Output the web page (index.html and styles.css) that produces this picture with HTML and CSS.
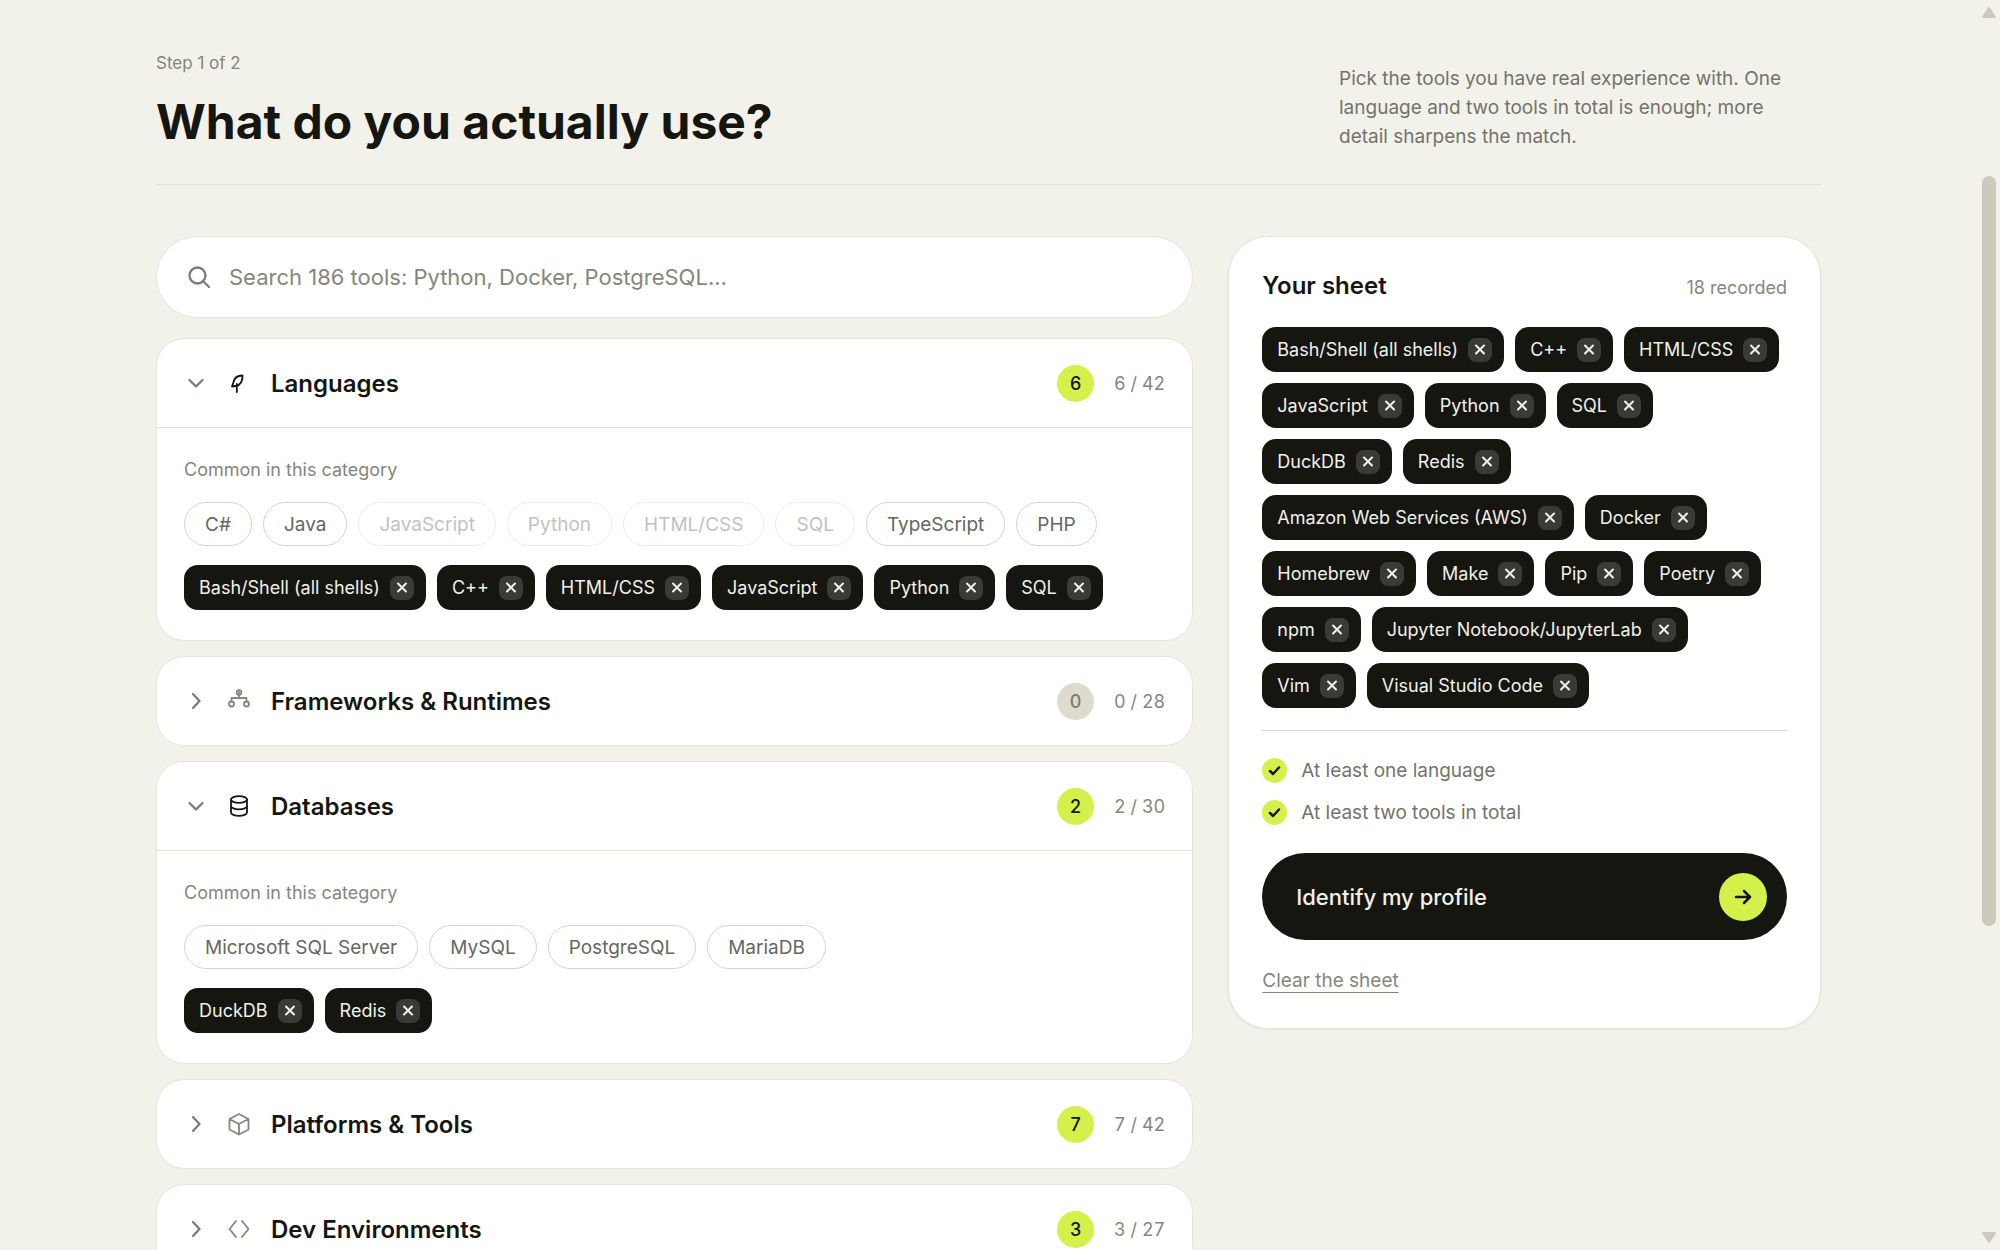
FILE: index.html
```html
<!DOCTYPE html>
<html lang="en">
<head>
    <meta charset="UTF-8">
    <meta name="viewport" content="width=device-width, initial-scale=1.0">
    <title>What do you actually use?</title>
    <link rel="stylesheet" href="styles.css">
</head>
<body>
    <main class="page">
        <header class="page-header">
            <div>
                <p class="step">Step 1 of 2</p>
                <h1>What do you actually use?</h1>
            </div>
            <p class="intro">Pick the tools you have real experience with. One language and two tools in total is enough; more detail sharpens the match.</p>
        </header>

        <div class="columns">
            <div class="picker">
                <label class="search">
                    <svg class="search-icon" viewBox="0 0 24 24"><circle cx="10.5" cy="10.5" r="8"/><path d="M16.5 16.5 22 22"/></svg>
                    <input type="search" aria-label="Search tools" placeholder="Search 186 tools: Python, Docker, PostgreSQL...">
                </label>

                <section class="category open">
                    <button class="category-header" aria-expanded="true">
                        <svg class="chevron" viewBox="0 0 22 22"><path d="M4.500 8 11 14.500 17.500 8"/></svg>
                        <svg class="icon" viewBox="0 0 24 24"><path d="M15.500 4.500C10.500 4.500 7 7 6.200 12L5 15.500 11 14.500C14.500 12 15.800 9 15.500 4.500ZM9.800 13V21"/></svg>
                        <span class="category-name">Languages</span>
                        <span class="badge">6</span>
                        <span class="count">6 / 42</span>
                    </button>
                    <div class="category-body">
                        <p class="hint">Common in this category</p>
                        <div class="chips" data-common="C#|Java|JavaScript|Python|HTML/CSS|SQL|TypeScript|PHP"></div>
                        <div class="chips" data-picked="Bash/Shell (all shells)|C++|HTML/CSS|JavaScript|Python|SQL"></div>
                    </div>
                </section>

                <section class="category">
                    <button class="category-header" aria-expanded="false">
                        <svg class="chevron" viewBox="0 0 22 22"><path d="M8 4 14.500 11 8 18"/></svg>
                        <svg class="icon" viewBox="0 0 24 24"><circle cx="12" cy="3.500" r="2.300"/><circle cx="4.500" cy="15" r="2.500"/><circle cx="19.500" cy="15" r="2.500"/><path d="M12 3V9M4.500 12.500V9H19.500V12.500"/></svg>
                        <span class="category-name">Frameworks &amp; Runtimes</span>
                        <span class="badge empty">0</span>
                        <span class="count">0 / 28</span>
                    </button>
                </section>

                <section class="category open">
                    <button class="category-header" aria-expanded="true">
                        <svg class="chevron" viewBox="0 0 22 22"><path d="M4.500 8 11 14.500 17.500 8"/></svg>
                        <svg class="icon" viewBox="0 0 24 24"><ellipse cx="12" cy="5.500" rx="8" ry="3.300"/><path d="M4 5.500V18.500C4 20.300 7.600 21.800 12 21.800S20 20.300 20 18.500V5.500M4 12C4 13.800 7.600 15.300 12 15.300S20 13.800 20 12"/></svg>
                        <span class="category-name">Databases</span>
                        <span class="badge">2</span>
                        <span class="count">2 / 30</span>
                    </button>
                    <div class="category-body">
                        <p class="hint">Common in this category</p>
                        <div class="chips" data-common="Microsoft SQL Server|MySQL|PostgreSQL|MariaDB"></div>
                        <div class="chips" data-picked="DuckDB|Redis"></div>
                    </div>
                </section>

                <section class="category">
                    <button class="category-header" aria-expanded="false">
                        <svg class="chevron" viewBox="0 0 22 22"><path d="M8 4 14.500 11 8 18"/></svg>
                        <svg class="icon" viewBox="0 0 24 24"><path d="M12 2 21.500 7V17.500L12 22.500 2.500 17.500V7ZM2.500 7 12 12 21.500 7M12 12V22.500"/></svg>
                        <span class="category-name">Platforms &amp; Tools</span>
                        <span class="badge">7</span>
                        <span class="count">7 / 42</span>
                    </button>
                </section>

                <section class="category">
                    <button class="category-header" aria-expanded="false">
                        <svg class="chevron" viewBox="0 0 22 22"><path d="M8 4 14.500 11 8 18"/></svg>
                        <svg class="icon" viewBox="0 0 24 24"><path d="M9 4 2.500 12 9 20M15 4 21.500 12 15 20"/></svg>
                        <span class="category-name">Dev Environments</span>
                        <span class="badge">3</span>
                        <span class="count">3 / 27</span>
                    </button>
                </section>
            </div>

            <aside class="sheet">
                <div class="sheet-header">
                    <h2>Your sheet</h2>
                    <span class="recorded">18 recorded</span>
                </div>
                <div class="chips" data-picked="Bash/Shell (all shells)|C++|HTML/CSS|JavaScript|Python|SQL|DuckDB|Redis|Amazon Web Services (AWS)|Docker|Homebrew|Make|Pip|Poetry|npm|Jupyter Notebook/JupyterLab|Vim|Visual Studio Code"></div>
                <ul class="rules">
                    <li><svg class="tick" viewBox="0 0 25 25"><path d="M8 13 11 16 17 9.500"/></svg>At least one language</li>
                    <li><svg class="tick" viewBox="0 0 25 25"><path d="M8 13 11 16 17 9.500"/></svg>At least two tools in total</li>
                </ul>
                <button class="submit">
                    Identify my profile
                    <svg class="arrow" viewBox="0 0 48 48"><path d="M17 24H31M25 18 31 24 25 30"/></svg>
                </button>
                <a class="clear" href="#">Clear the sheet</a>
            </aside>
        </div>
    </main>

    <div class="scrollbar" aria-hidden="true">
        <svg viewBox="0 0 14 11"><path d="M7 1 13 10H1Z"/></svg>
        <div class="track"><div class="thumb"></div></div>
        <svg viewBox="0 0 14 11"><path d="M7 10 13 1H1Z"/></svg>
    </div>

    <script>
        const sheet = document.querySelector('.sheet .chips').dataset.picked.split('|');

        document.querySelectorAll('[data-common]').forEach(row => {
            row.dataset.common.split('|').forEach(name => {
                const chip = document.createElement('button');
                chip.className = 'chip';
                chip.textContent = name;
                chip.disabled = sheet.includes(name);
                row.appendChild(chip);
            });
        });

        document.querySelectorAll('[data-picked]').forEach(row => {
            row.dataset.picked.split('|').forEach(name => {
                const chip = document.createElement('span');
                chip.className = 'chip picked';
                chip.textContent = name;

                const remove = document.createElement('button');
                remove.className = 'remove';
                remove.setAttribute('aria-label', 'Remove ' + name);
                remove.innerHTML = '<svg viewBox="0 0 24 24"><path d="M8 7.500 16 15.500M16 7.500 8 15.500"/></svg>';

                chip.appendChild(remove);
                row.appendChild(chip);
            });
        });
    </script>
</body>
</html>
```
FILE: styles.css
```css
* {
    margin: 0;
    padding: 0;
    box-sizing: border-box;
}

body {
    display: flex;
    height: 100vh;
    overflow: hidden;
    background: #f2f1ea;
    color: #15160f;
    font-family: Inter, sans-serif;
    font-size: 19px;
}

button, input {
    font: inherit;
    color: inherit;
    border: none;
    background: none;
}

button {
    cursor: pointer;
}

svg {
    flex: none;
    fill: none;
    stroke: currentColor;
    stroke-width: 2;
    stroke-linecap: round;
    stroke-linejoin: round;
}

.page {
    flex: 1;
    padding: 50px 156px 0;
}

.page-header {
    display: flex;
    justify-content: space-between;
    align-items: flex-end;
    padding-bottom: 33px;
    margin-bottom: 51px;
    border-bottom: 1px solid #e2e1d9;
}

.step {
    color: #85867c;
    font-size: 17px;
    line-height: 26px;
    margin-bottom: 17px;
}

h1 {
    font-size: 48px;
    font-weight: 700;
    line-height: 58px;
}

.intro {
    width: 482px;
    padding-right: 22px;
    color: #73746b;
    line-height: 29px;
}

.columns {
    display: grid;
    grid-template-columns: 7fr 4fr;
    gap: 35px;
    align-items: start;
}

.picker {
    display: flex;
    flex-direction: column;
    gap: 15px;
}

.search, .category, .sheet {
    background: #fff;
    border: 1px solid #e5e4dc;
}

.search {
    display: flex;
    align-items: center;
    gap: 18px;
    height: 82px;
    padding: 0 30px;
    margin-bottom: 5px;
    border-radius: 41px;
}

.search-icon {
    width: 24px;
    color: #7b7c73;
    stroke-width: 2.3;
}

.search input {
    flex: 1;
    font-size: 22px;
    outline: none;
}

.search input::placeholder {
    color: #85867c;
}

.category {
    border-radius: 28px;
    overflow: hidden;
}

.category-header {
    display: flex;
    align-items: center;
    gap: 20px;
    width: 100%;
    height: 88px;
    padding: 0 27px 0 28px;
    text-align: left;
}

.chevron {
    width: 22px;
    color: #7b7c73;
    stroke-width: 2.3;
}

.icon {
    width: 24px;
    color: #85867c;
    stroke-width: 1.8;
}

.open .icon {
    color: #15160f;
}

.category-name {
    flex: 1;
    font-size: 24px;
    font-weight: 600;
}

.badge {
    width: 37px;
    border-radius: 50%;
    background: #d4f04b;
    font-size: 18px;
    font-weight: 500;
    line-height: 37px;
    text-align: center;
}

.badge.empty {
    background: #dddbce;
    color: #7b7c73;
}

.count {
    color: #85867c;
    font-size: 18px;
    font-variant-numeric: tabular-nums;
}

.category-body {
    display: flex;
    flex-direction: column;
    gap: 19px;
    padding: 28px 27px 30px;
    border-top: 1px solid #e2e1d9;
}

.hint {
    color: #85867c;
    font-size: 18px;
    line-height: 27px;
}

.chips {
    display: flex;
    flex-wrap: wrap;
    gap: 11px;
}

.chip {
    height: 44px;
    padding: 0 20px;
    border: 1px solid #d6d5ca;
    border-radius: 22px;
    color: #66675f;
}

.chip:disabled {
    opacity: 0.4;
}

.chip.picked {
    display: flex;
    align-items: center;
    gap: 10px;
    height: 45px;
    padding: 0 12px 0 15px;
    border: none;
    border-radius: 14px;
    background: #15160f;
    color: #f1f0ea;
    font-size: 18px;
}

.remove {
    width: 24px;
    height: 24px;
    border-radius: 8px;
    background: #3a3b35;
}

.remove svg {
    display: block;
}

.sheet {
    padding: 33px;
    border-radius: 40px;
    box-shadow: 0 1px 3px rgba(21, 22, 15, 0.06);
}

.sheet-header {
    display: flex;
    justify-content: space-between;
    align-items: baseline;
    margin-bottom: 25px;
}

h2 {
    font-size: 24px;
    font-weight: 600;
    line-height: 32px;
}

.recorded {
    color: #85867c;
    font-size: 18px;
}

.rules {
    display: flex;
    flex-direction: column;
    gap: 17px;
    margin: 22px 0 28px;
    padding-top: 27px;
    border-top: 1px solid #dddcd0;
    list-style: none;
}

.rules li {
    display: flex;
    align-items: center;
    gap: 14px;
    color: #73746b;
    line-height: 25px;
}

.tick {
    width: 25px;
    border-radius: 50%;
    background: #d4f04b;
    color: #15160f;
    stroke-width: 2.5;
}

.submit {
    display: flex;
    justify-content: space-between;
    align-items: center;
    width: 100%;
    height: 87px;
    padding: 0 20px 0 34px;
    border-radius: 44px;
    background: #15160f;
    color: #f1f0ea;
    font-size: 22px;
    font-weight: 500;
}

.arrow {
    width: 48px;
    border-radius: 50%;
    background: #d4f04b;
    color: #15160f;
    stroke-width: 2.5;
}

.clear {
    display: inline-block;
    margin-top: 27px;
    color: #85867c;
    line-height: 28px;
    text-underline-offset: 5px;
}

.scrollbar {
    display: flex;
    flex-direction: column;
    align-items: center;
    width: 23px;
    padding: 7px 0;
}

.scrollbar svg {
    width: 14px;
    fill: #cbcabb;
    stroke: #cbcabb;
}

.track {
    flex: 1;
    padding-top: 158px;
}

.thumb {
    width: 14px;
    height: 71%;
    border-radius: 7px;
    background: #cbcabb;
}

@media (max-width: 1100px) {
    .page {
        padding: 32px 24px 0;
    }

    .columns {
        grid-template-columns: 1fr;
    }
}
```
